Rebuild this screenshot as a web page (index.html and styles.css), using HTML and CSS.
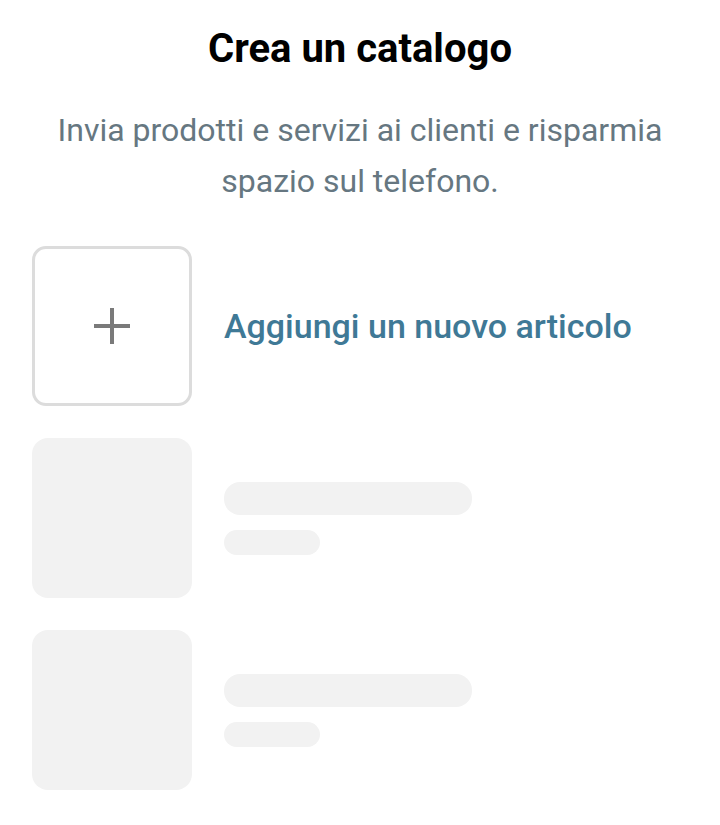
FILE: index.html
```html
<!DOCTYPE html>
<html lang="it">
<head>
<meta charset="utf-8">
<link rel="stylesheet" href="styles.css">
</head>
<body>
<main class="page">
  <h1 class="title">Crea un catalogo</h1>
  <p class="subtitle">Invia prodotti e servizi ai clienti e risparmia spazio sul telefono.</p>
  <ul class="list">
    <li class="row">
      <div class="thumb add">
        <svg width="38" height="38" viewBox="0 0 38 38"><path d="M19 1v36M1 19h36" stroke="#7a7a7a" stroke-width="4"/></svg>
      </div>
      <span class="add-label">Aggiungi un nuovo articolo</span>
    </li>
    <li class="row">
      <div class="thumb skeleton"></div>
      <div class="lines">
        <div class="bar long"></div>
        <div class="bar short"></div>
      </div>
    </li>
    <li class="row">
      <div class="thumb skeleton"></div>
      <div class="lines">
        <div class="bar long"></div>
        <div class="bar short"></div>
      </div>
    </li>
  </ul>
</main>
</body>
</html>
```
FILE: styles.css
```css
html, body {
  margin: 0;
  padding: 0;
  background: #ffffff;
}
body {
  font-family: Roboto, "Noto Sans", sans-serif;
}
.page {
  width: 720px;
  padding: 0 32px;
  box-sizing: border-box;
}
.title {
  margin: 0;
  padding-top: 25px;
  font-size: 40px;
  line-height: 48px;
  font-weight: 700;
  color: #000000;
  text-align: center;
}
.subtitle {
  margin: 32px 0 0;
  font-size: 32px;
  line-height: 51px;
  color: #667781;
  text-align: center;
}
.list {
  list-style: none;
  margin: 39px 0 0;
  padding: 0;
  display: flex;
  flex-direction: column;
  gap: 32px;
}
.row {
  display: flex;
  align-items: center;
  gap: 32px;
}
.thumb {
  width: 160px;
  height: 160px;
  box-sizing: border-box;
  border-radius: 16px;
  flex: none;
}
.add {
  border: 3px solid #dcdcdc;
  border-radius: 14px;
  display: flex;
  align-items: center;
  justify-content: center;
}
.skeleton {
  background: #f2f2f2;
}
.add-label {
  font-size: 34px;
  font-weight: 500;
  color: #3f7996;
}
.lines {
  display: flex;
  flex-direction: column;
  gap: 15px;
}
.bar {
  background: #f2f2f2;
  border-radius: 16px;
}
.bar.long {
  width: 248px;
  height: 33px;
}
.bar.short {
  width: 96px;
  height: 25px;
}
```
